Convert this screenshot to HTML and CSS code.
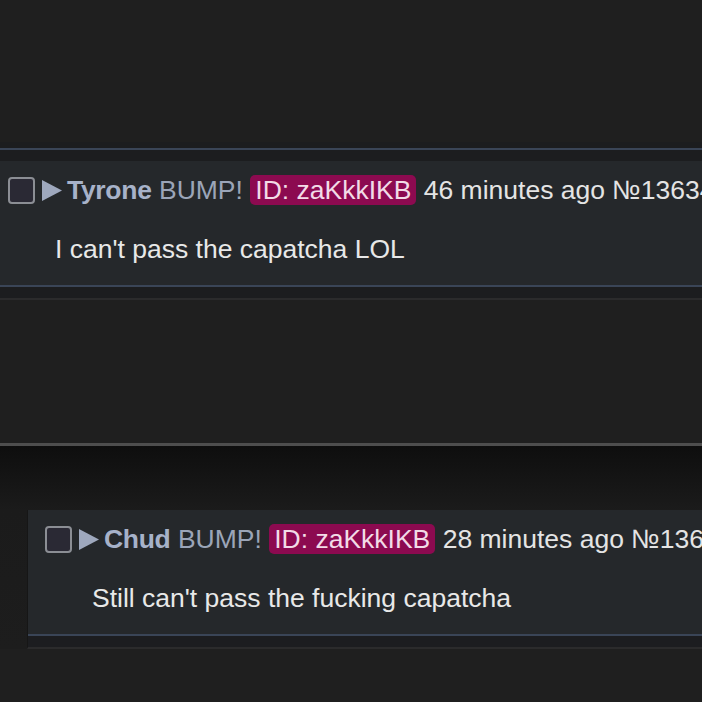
FILE: index.html
```html
<!DOCTYPE html>
<html>
<head>
<meta charset="utf-8">
<link rel="stylesheet" href="styles.css">
</head>
<body>
<div class="page">
  <div class="top-space"></div>
  <section class="thread thread-one">
    <div class="blue-rule"></div>
    <article class="post post-one">
      <div class="post-head">
        <span class="check"></span>
        <svg class="caret" width="20" height="21" viewBox="0 0 20 21"><polygon points="0,0 20,10.5 0,21" fill="#9ea8bd"/></svg>
        <span class="meta"><b class="name">Tyrone</b> <span class="subject">BUMP!</span> <span class="pid">ID: zaKkkIKB</span> <span class="time">46 minutes ago</span> <span class="num">№1363452</span></span>
      </div>
      <p class="post-body">I can't pass the capatcha LOL</p>
    </article>
  </section>
  <div class="mid-space"></div>
  <section class="thread thread-two">
    <div class="reply-wrap">
      <article class="post post-two">
        <div class="post-head">
          <span class="check"></span>
          <svg class="caret" width="20" height="21" viewBox="0 0 20 21"><polygon points="0,0 20,10.5 0,21" fill="#9ea8bd"/></svg>
          <span class="meta"><b class="name">Chud</b> <span class="subject">BUMP!</span> <span class="pid">ID: zaKkkIKB</span> <span class="time">28 minutes ago</span> <span class="num">№1363521</span></span>
        </div>
        <p class="post-body">Still can't pass the fucking capatcha</p>
      </article>
    </div>
  </section>
  <div class="bottom-space"></div>
</div>
</body>
</html>
```
FILE: styles.css
```css
html, body {
  margin: 0;
  padding: 0;
  background: #1f1f1f;
}
body {
  font-family: "Liberation Sans", Arial, sans-serif;
  font-size: 26.5px;
  line-height: 30px;
  color: #e4e4e4;
}
.page {
  width: 702px;
  height: 702px;
  overflow: hidden;
  background: #1f1f1f;
}
.top-space {
  height: 142px;
}
.thread-one {
  background: #1c1d1f;
  padding-top: 6px;
  padding-bottom: 11px;
  border-bottom: 2px solid #2b2b2c;
}
.blue-rule {
  height: 2px;
  background: #3a4557;
  margin-bottom: 11px;
}
.post {
  background: #25282b;
  border-bottom: 2px solid #3a4557;
  padding: 14px 0 21px 17px;
  white-space: nowrap;
}
.post-one {
  margin-left: -9px;
}
.post-head {
  display: flex;
  align-items: center;
  height: 30px;
}
.check {
  flex: none;
  width: 23px;
  height: 23px;
  border: 2px solid #8b8e94;
  border-radius: 4px;
  background: #2a2934;
  margin-right: 7px;
}
.caret {
  flex: none;
  display: block;
  margin-right: 5px;
}
.meta {
  display: block;
}
.name {
  color: #a7b2c9;
  font-weight: bold;
  letter-spacing: -0.3px;
}
.subject {
  color: #9ba5b8;
}
.pid {
  background: #8c0a50;
  color: #f2dbe7;
  border-radius: 5px;
  padding: 0 5px;
  display: inline-block;
  line-height: 30px;
}
.time, .num {
  color: #e4e4e4;
}
.post-body {
  margin: 29px 0 0 47px;
  color: #e8e8e8;
}
.mid-space {
  height: 143px;
}
.thread-two {
  border-top: 3px solid #4e4e4e;
  background: linear-gradient(#0e0e0e, #1b1b1b 64px, #1d1d1d);
  padding-top: 64px;
  padding-left: 27px;
}
.reply-wrap {
  background: #1c1d20;
  border-left: 1px solid #161616;
  padding-bottom: 11px;
  border-bottom: 2px solid #2b2b2c;
}
.bottom-space {
  height: 60px;
}
```
